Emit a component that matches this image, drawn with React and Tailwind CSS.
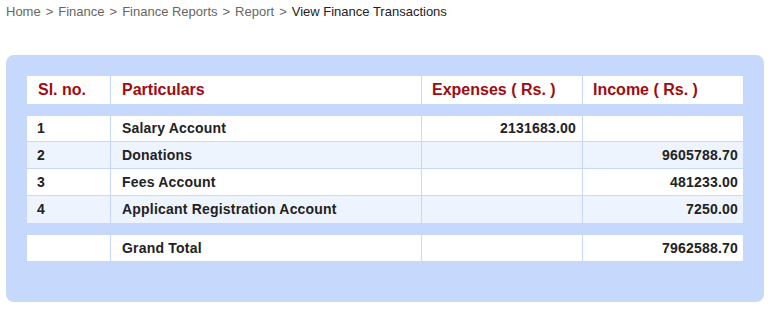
const rows = [
  { sl: '1', name: 'Salary Account', expense: '2131683.00', income: '', h: 'h-[26px]' },
  { sl: '2', name: 'Donations', expense: '', income: '9605788.70', h: 'h-[27px]' },
  { sl: '3', name: 'Fees Account', expense: '', income: '481233.00', h: 'h-[27px]' },
  { sl: '4', name: 'Applicant Registration Account', expense: '', income: '7250.00', h: 'h-[27px]' },
];

const crumbs = ['Home', 'Finance', 'Finance Reports', 'Report'];

function Row({ sl, name, expense, income, shaded, last, h }) {
  return (
    <div
      className={`flex ${h} items-center text-[14px] tracking-[0.2px] font-bold text-[#222] ${shaded ? 'bg-[#eef4fe]' : 'bg-white'} ${last ? '' : 'border-b border-[#c6d9fc]'}`}
    >
      <div className="w-[84px] h-full flex items-center pl-[10px] border-r border-[#c6d9fc]">{sl}</div>
      <div className="w-[311px] h-full flex items-center pl-[11px] border-r border-[#c6d9fc]">{name}</div>
      <div className="w-[161px] h-full flex items-center justify-end pr-[6px] border-r border-[#c6d9fc]">{expense}</div>
      <div className="flex-1 h-full flex items-center justify-end pr-[5px]">{income}</div>
    </div>
  );
}

export default function App() {
  return (
    <div className="w-[771px] h-[310px] bg-white font-['Liberation_Sans',Arial,sans-serif]">
      <div className="pl-[6px] h-[24px] text-[13px] text-[#666] flex items-center">
        {crumbs.map((c) => (
          <span key={c}>
            {c}
            <span className="mx-[5px]">&gt;</span>
          </span>
        ))}
        <span className="text-[#222]">View Finance Transactions</span>
      </div>

      <div className="ml-[6px] mt-[31px] w-[758px] h-[247px] rounded-[8px] bg-[#c6d9fc] pt-[21px] pl-[21px]">
        <div className="w-[716px]">
          <div className="flex h-[28px] items-center bg-white text-[16px] font-bold text-[#a00b10]">
            <div className="w-[84px] h-full flex items-center pl-[11px] border-r border-[#c6d9fc]">Sl. no.</div>
            <div className="w-[311px] h-full flex items-center pl-[11px] border-r border-[#c6d9fc]">Particulars</div>
            <div className="w-[161px] h-full flex items-center pl-[10px] border-r border-[#c6d9fc]">Expenses ( Rs. )</div>
            <div className="flex-1 h-full flex items-center pl-[10px]">Income ( Rs. )</div>
          </div>

          <div className="mt-[12px]">
            {rows.map((r, i) => (
              <Row key={r.sl} {...r} shaded={i % 2 === 1} last={i === rows.length - 1} />
            ))}
          </div>

          <div className="mt-[12px]">
            <Row sl="" name="Grand Total" expense="" income="7962588.70" h="h-[26px]" last />
          </div>
        </div>
      </div>
    </div>
  );
}
